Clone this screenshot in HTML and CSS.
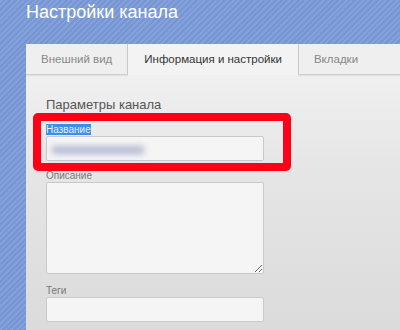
FILE: index.html
```html
<!DOCTYPE html>
<html lang="ru">
  <head>
    <meta charset="UTF-8" />
    <title>Настройки канала</title>
    <link rel="stylesheet" href="styles.css">
  </head>
  <body>
    <h1 class="page-title">Настройки канала</h1>

    <div class="panel">
      <ul class="tabs">
        <li class="tab">Внешний вид</li>
        <li class="tab active">Информация и настройки</li>
        <li class="tab last">Вкладки</li>
      </ul>

      <div class="content">
        <h2>Параметры канала</h2>

        <div class="field-group">
          <label class="selected">Название</label>
          <div class="field"><span class="blurred"></span></div>
        </div>

        <div class="field-group wide-gap">
          <label>Описание</label>
          <textarea class="field area"></textarea>
        </div>

        <div class="field-group">
          <label>Теги</label>
          <div class="field"></div>
        </div>

        <div class="highlight-box"></div>
      </div>
    </div>
  </body>
</html>
```

FILE: styles.css
```css
* {
  margin: 0;
  padding: 0;
  box-sizing: border-box;
}
body {
  font-family: "Liberation Sans", Arial, sans-serif;
  background: repeating-linear-gradient(-45deg, #7795d3 0 2px, #83a1db 2px 4px);
  width: 400px;
  height: 330px;
  overflow: hidden;
}
.page-title {
  font-size: 18px;
  font-weight: normal;
  color: #fff;
  line-height: 22px;
  padding: 1px 0 0 26px;
}
.panel {
  margin: 21px 0 0 26px;
  height: 300px;
  background: linear-gradient(#f3f3f3, #e6e6e6 40%, #dadada);
}
.tabs {
  list-style: none;
  display: flex;
  height: 31px;
}
.tab {
  font-size: 11.5px;
  line-height: 30px;
  color: #888;
  padding: 0 15px;
  background-color: #efefef;
  border-bottom: 1px solid #cfcfcf;
  border-right: 1px solid #c9c9c9;
  box-shadow: 0 1px 1px rgba(0, 0, 0, 0.06);
}
.tab.active {
  color: #333;
  background-color: #f3f3f3;
  border-bottom-color: transparent;
  border-right: none;
  box-shadow: none;
  padding: 0 16px;
}
.tab.last {
  flex: 1;
  border-left: 1px solid #c9c9c9;
  border-right: none;
}
.content {
  position: relative;
  padding: 22px 0 0 20px;
}
h2 {
  font-size: 13px;
  font-weight: normal;
  color: #555;
  line-height: 16px;
  margin-bottom: 11px;
}
.field-group {
  margin-bottom: 9px;
}
.field-group.wide-gap {
  margin-bottom: 11px;
}
.field-group label {
  display: block;
  width: fit-content;
  font-size: 10px;
  line-height: 11px;
  color: #777;
  margin-bottom: 1px;
}
.field-group label.selected {
  background-color: #3c8ee8;
  color: #e6eeff;
}
.field {
  display: block;
  width: 218px;
  height: 25px;
  background-color: #f5f5f5;
  border: 1px solid #c9c9c9;
  border-radius: 2px;
  position: relative;
}
.field.area {
  height: 92px;
  resize: vertical;
  font-family: inherit;
}
.blurred {
  position: absolute;
  left: 5px;
  top: 9px;
  width: 92px;
  height: 8px;
  background-color: rgba(125, 135, 180, 0.55);
  filter: blur(3px);
}
.highlight-box {
  position: absolute;
  left: 7px;
  top: 38px;
  width: 258px;
  height: 58px;
  border: 8px solid #ff0019;
  border-radius: 5px;
}
```
